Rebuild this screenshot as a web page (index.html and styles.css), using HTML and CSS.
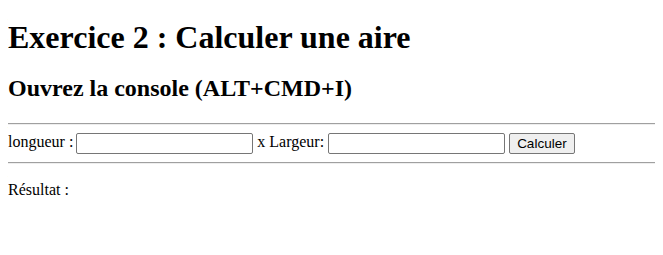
FILE: index.html
```html
<!DOCTYPE html>
<html lang="fr">
<head>
<meta charset="utf-8">
<title>Exercice 2</title>
<link rel="stylesheet" href="styles.css">
</head>
<body>
<h1 class="title">Exercice 2 : Calculer une aire</h1>
<h2 class="subtitle">Ouvrez la console (ALT+CMD+I)</h2>
<hr class="rule">
<div class="form-row">longueur : <input class="field" type="text"> x Largeur: <input class="field field-second" type="text"> <button class="btn">Calculer</button></div>
<hr class="rule rule-bottom">
<p class="result">Résultat :</p>
</body>
</html>
```
FILE: styles.css
```css
html {
  overflow: hidden;
}
body {
  margin: 8px;
  font-family: "Liberation Serif", "Times New Roman", serif;
  font-size: 16px;
  color: #000;
  background: #fff;
}
.title {
  font-size: 32px;
  margin: 11px 0 19px;
}
.subtitle {
  font-size: 24px;
  margin: 19px 0 21px;
}
.rule {
  box-sizing: border-box;
  width: calc(100vw - 8px);
  border: none;
  border-top: 1px solid #a0a0a0;
  border-bottom: 1px solid #eee;
  margin: 8px 0 7px 0;
}
.form-row {
  line-height: 20px;
}
.field {
  box-sizing: border-box;
  width: 177px;
  height: 21px;
  border: 1px solid #767676;
  border-radius: 2px;
  padding: 1px 2px;
  font-family: "Liberation Sans", Arial, sans-serif;
  font-size: 13px;
  vertical-align: middle;
  margin-left: -1px;
}
.field-second {
  margin-left: 0;
}
.btn {
  box-sizing: border-box;
  height: 21px;
  padding: 1px 7px;
  border: 1px solid #767676;
  border-radius: 2px;
  background: #efefef;
  font-family: "Liberation Sans", Arial, sans-serif;
  font-size: 13.5px;
  vertical-align: middle;
  margin-left: 0;
}
.rule-bottom {
  margin: 8px 0;
}
.result {
  margin: 17px 0;
}
```
